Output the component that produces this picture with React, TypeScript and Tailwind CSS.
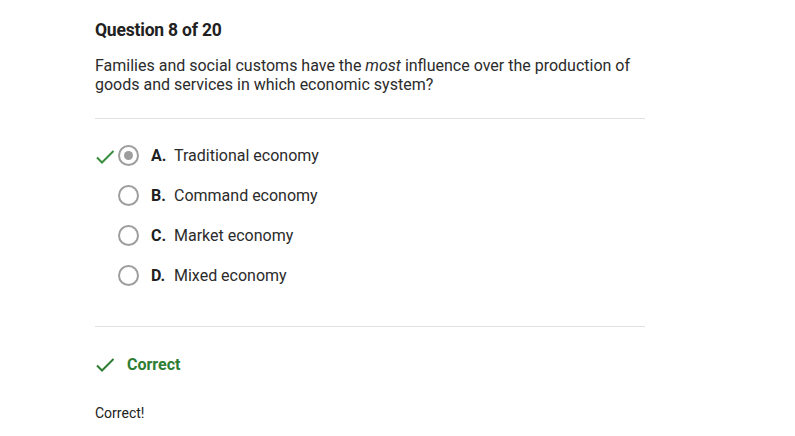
import React from 'react';

const OPTIONS = [
  { letter: 'A.', text: 'Traditional economy', selected: true },
  { letter: 'B.', text: 'Command economy', selected: false },
  { letter: 'C.', text: 'Market economy', selected: false },
  { letter: 'D.', text: 'Mixed economy', selected: false },
];

function Check({ className }: { className?: string }) {
  return (
    <svg viewBox="0 0 20 20" className={className} fill="none" stroke="currentColor" strokeWidth="2">
      <path d="M2 10.5l5 5L18.5 4" />
    </svg>
  );
}

export default function App() {
  return (
    <div className="min-h-screen bg-white text-[#212121]" style={{ fontFamily: 'Roboto, "Liberation Sans", sans-serif' }}>
      <div className="w-[550px] ml-[95px] pt-[19px]">
        <h1 className="text-[17.5px] font-bold leading-[22px] tracking-[-0.2px]">Question 8 of 20</h1>

        <p className="mt-[15px] text-[16px] leading-[19px] text-[#2b2b2b]">
          Families and social customs have the <em>most</em> influence over the production of goods and services in which economic system?
        </p>

        <div className="mt-[24px] border-t border-[#e0e0e0]" />

        <div className="pt-[26px] pb-[40px] flex flex-col gap-[19px]">
          {OPTIONS.map((o) => (
            <div key={o.letter} className="flex items-center h-[21px]">
              <div className="w-[23px] flex justify-start">
                {o.selected && <Check className="w-[20px] h-[20px] text-[#388e3c] mt-[3px]" />}
              </div>
              <div className="w-[21px] h-[21px] rounded-full border-2 border-[#9e9e9e] flex items-center justify-center">
                {o.selected && <div className="w-[9px] h-[9px] rounded-full bg-[#9e9e9e]" />}
              </div>
              <span className="ml-[12px] text-[16px] font-bold w-[23px]">{o.letter}</span>
              <span className="text-[16px] text-[#2b2b2b]">{o.text}</span>
            </div>
          ))}
        </div>

        <div className="border-t border-[#e0e0e0]" />

        <div className="mt-[27px] flex items-center h-[22px]">
          <Check className="w-[20px] h-[20px] text-[#2e7d32]" />
          <span className="ml-[12px] text-[16px] font-bold text-[#2e7d32]">Correct</span>
        </div>

        <p className="mt-[28px] text-[14px] leading-[18px]">Correct!</p>
      </div>
    </div>
  );
}
